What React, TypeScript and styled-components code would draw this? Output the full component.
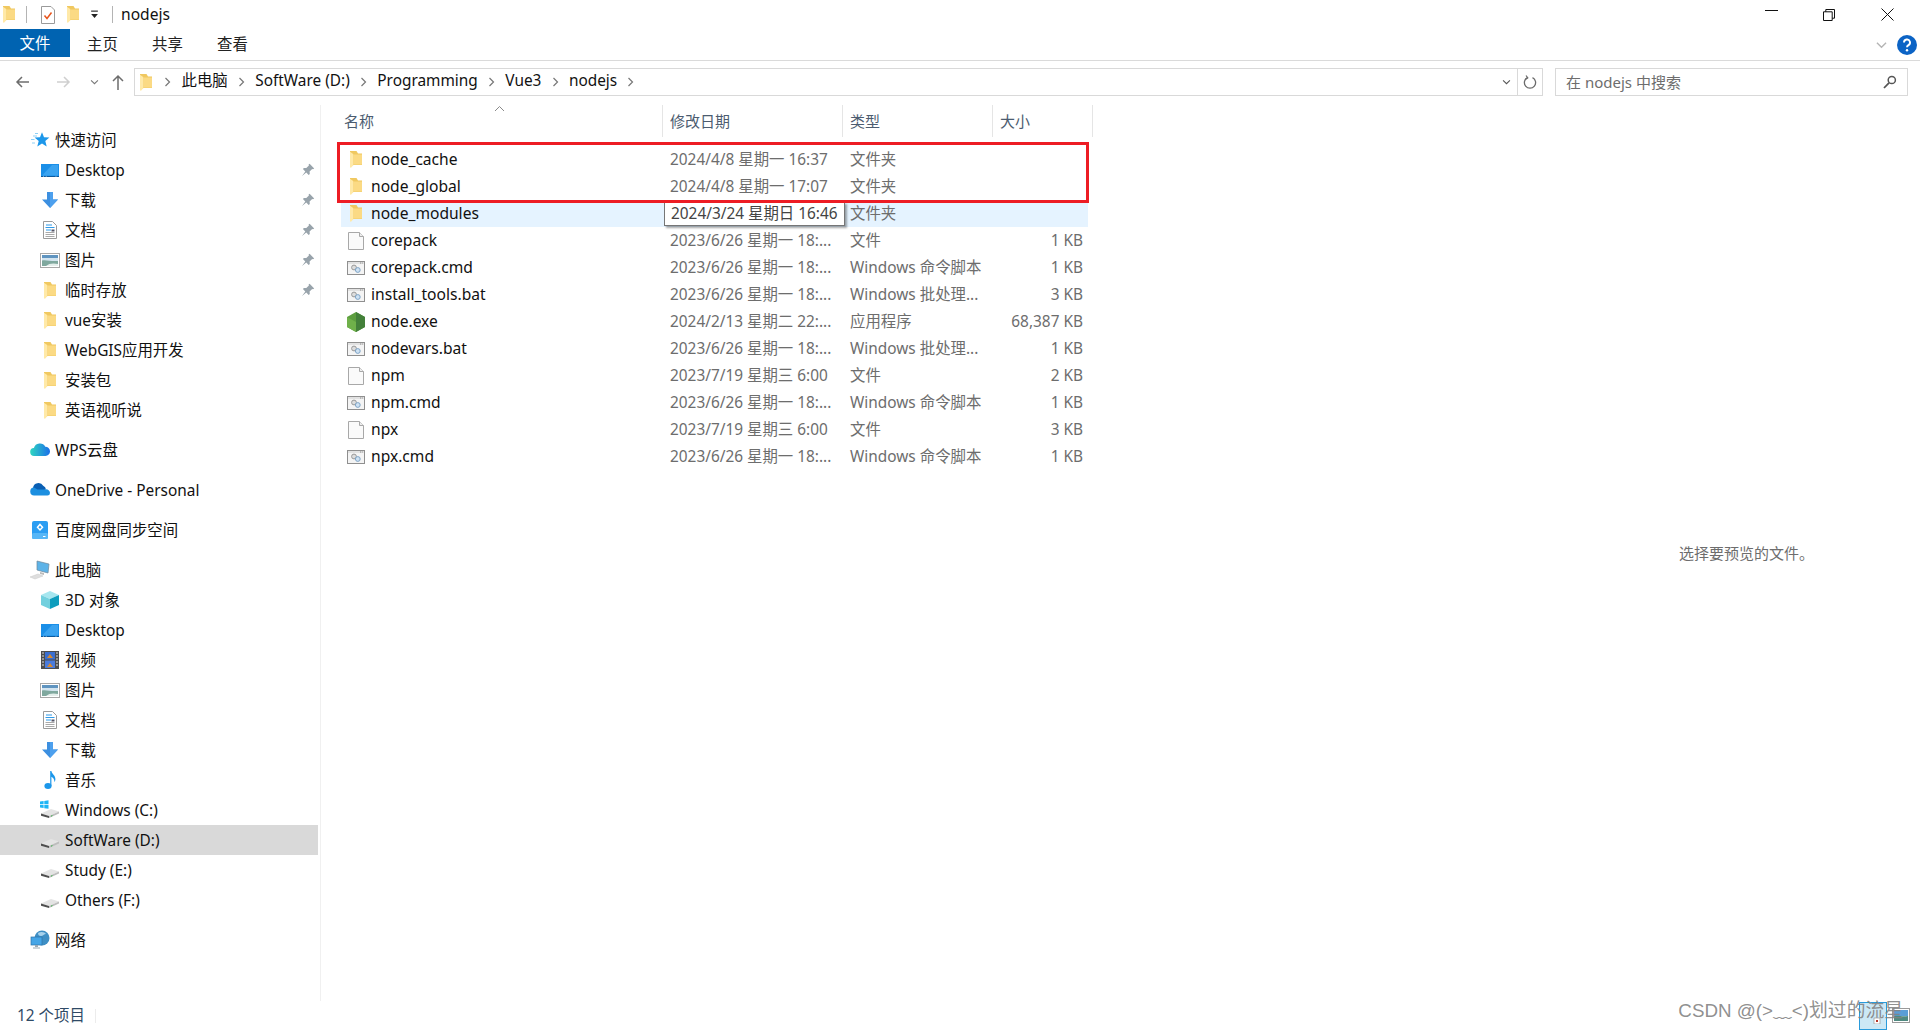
import React from "react";
import styled, { createGlobalStyle } from "styled-components";

const GlobalStyle = createGlobalStyle`
  html, body { margin: 0; padding: 0; background: #fff; }
  body { font-family: "Noto Sans", "Noto Sans CJK SC", sans-serif; line-height: 20px; }
  * { box-sizing: border-box; }
`;

const Window = styled.div`
  position: relative;
  width: 1920px;
  height: 1030px;
  display: flex;
  flex-direction: column;
  overflow: hidden;
  background: #fff;
  color: #000;
`;

/* ---------- title bar ---------- */
const TitleBar = styled.div`
  height: 29px;
  display: flex;
  align-items: center;
  padding-left: 3px;
  flex: none;
`;
const QuickSlot = styled.span<{ $ml: number; $w: number }>`
  margin-left: ${(p) => p.$ml}px;
  width: ${(p) => p.$w}px;
  display: flex;
  justify-content: center;
  align-items: center;
  flex: none;
`;
const TitleSep = styled.span<{ $ml: number }>`
  margin-left: ${(p) => p.$ml}px;
  width: 1px;
  height: 17px;
  background: #b4b4b4;
  flex: none;
`;
const TitleText = styled.span`
  margin-left: 8px;
  padding-bottom: 2px;
  font-size: 15.6px;
  color: #111;
`;
const WindowControls = styled.div`
  margin-left: auto;
  display: flex;
  padding-right: 4px;
  height: 29px;
`;
const WindowButton = styled.span`
  width: 58px;
  display: flex;
  align-items: center;
  justify-content: center;
`;

/* ---------- ribbon ---------- */
const Ribbon = styled.div`
  height: 32px;
  display: flex;
  align-items: flex-start;
  border-bottom: 1px solid #dadada;
  flex: none;
`;
const RibbonTab = styled.div<{ $file?: boolean }>`
  width: ${(p) => (p.$file ? 70 : 65)}px;
  height: 28px;
  padding-top: ${(p) => (p.$file ? 1 : 3)}px;
  display: flex;
  align-items: center;
  justify-content: center;
  font-size: 15.4px;
  background: ${(p) => (p.$file ? "#0063b1" : "transparent")};
  color: ${(p) => (p.$file ? "#fff" : "#222")};
`;
const RibbonRight = styled.div`
  margin-left: auto;
  display: flex;
  align-items: center;
  gap: 9px;
  height: 32px;
  padding: 0 3px 0 0;
`;

/* ---------- nav row ---------- */
const NavRow = styled.div`
  height: 44px;
  display: flex;
  align-items: flex-start;
  padding: 7px 0 0 8px;
  flex: none;
`;
const NavButton = styled.span<{ $w: number }>`
  width: ${(p) => p.$w}px;
  height: 28px;
  display: flex;
  align-items: center;
  justify-content: center;
  flex: none;
`;
const AddressBox = styled.div`
  width: 1409px;
  height: 28px;
  border: 1px solid #d9d9d9;
  display: flex;
  align-items: center;
  padding-left: 5px;
  font-size: 15.4px;
  color: #111;
  flex: none;
`;
const AddressFolder = styled.span`
  display: flex;
  margin-right: 2px;
`;
const CrumbChevron = styled.span`
  width: 27.5px;
  display: flex;
  justify-content: center;
  flex: none;
`;
const Crumb = styled.span`
  padding-bottom: 2px;
  white-space: nowrap;
`;
const AddressEnd = styled.div`
  margin-left: auto;
  display: flex;
  height: 26px;
  align-items: center;
`;
const AddressDrop = styled.span`
  width: 22px;
  display: flex;
  justify-content: center;
`;
const AddressRefresh = styled.span`
  width: 25px;
  height: 26px;
  border-left: 1px solid #d9d9d9;
  display: flex;
  align-items: center;
  justify-content: center;
`;
const SearchBox = styled.div`
  margin-left: 12px;
  width: 353px;
  height: 28px;
  border: 1px solid #d9d9d9;
  display: flex;
  align-items: center;
  justify-content: space-between;
  padding: 0 10px;
  font-size: 15px;
  color: #6d6d6d;
  flex: none;
`;

/* ---------- body ---------- */
const Body = styled.div`
  flex: 1;
  min-height: 0;
  display: flex;
`;
const Sidebar = styled.nav`
  width: 321px;
  flex: none;
  border-right: 1px solid #f0f0f0;
  padding: 20px 2px 0 0;
  font-size: 15.4px;
`;
const NavGroup = styled.div`
  margin-bottom: 10px;
`;
const NavItem = styled.div<{ $child?: boolean; $selected?: boolean }>`
  height: 30px;
  display: flex;
  align-items: center;
  gap: 5px;
  padding-left: ${(p) => (p.$child ? 40 : 30)}px;
  padding-right: 3px;
  background: ${(p) => (p.$selected ? "#d9d9d9" : "transparent")};
  color: #111;
  white-space: nowrap;
`;
const NavLabel = styled.span`
  padding-top: 2px;
`;
const NavPin = styled.span`
  margin-left: auto;
  width: 14px;
  height: 14px;
  display: flex;
`;
const IconSlot = styled.span`
  width: 20px;
  height: 20px;
  display: flex;
  align-items: center;
  justify-content: center;
  flex: none;
`;

const Main = styled.main`
  position: relative;
  flex: 1;
  min-width: 0;
  display: flex;
`;
const ListPane = styled.div`
  flex: 1;
  padding-left: 20px;
  font-size: 15.4px;
`;
const ColumnHeader = styled.div`
  position: relative;
  display: grid;
  grid-template-columns: 322px 180px 150px 100px;
  width: 752px;
  height: 32px;
  color: #4c5c70;
`;
const HeaderCell = styled.div<{ $first?: boolean }>`
  display: flex;
  align-items: center;
  padding-left: ${(p) => (p.$first ? 3 : 7)}px;
  border-right: 1px solid #e5e5e5;
  font-size: 15px;
`;
const SortCaret = styled.span`
  position: absolute;
  left: 153px;
  top: 0;
  display: flex;
`;
const Rows = styled.div`
  padding-top: 9px;
`;
const Row = styled.div<{ $hot?: boolean }>`
  display: grid;
  grid-template-columns: 321px 180px 150px 96px;
  width: 747px;
  height: 27px;
  align-items: center;
  background: ${(p) => (p.$hot ? "#e5f3ff" : "transparent")};
`;
const NameCell = styled.div`
  display: flex;
  align-items: center;
  color: #111;
  font-size: 15.6px;
  white-space: nowrap;
`;
const NameText = styled.span`
  padding-bottom: 2px;
`;
const NameIcon = styled.span`
  width: 30px;
  padding: 0 6px;
  height: 22px;
  display: flex;
  align-items: center;
  justify-content: center;
  flex: none;
`;
const MetaCell = styled.div<{ $right?: boolean }>`
  padding: ${(p) => (p.$right ? "0 5px 0 0" : "0 0 0 8px")};
  text-align: ${(p) => (p.$right ? "right" : "left")};
  color: #6d6d6d;
  white-space: nowrap;
  overflow: hidden;
`;
const RedBox = styled.div`
  position: absolute;
  left: 16px;
  top: 37px;
  width: 752px;
  height: 61px;
  border: 3px solid #ed1c24;
  pointer-events: none;
`;
const Tooltip = styled.div`
  position: absolute;
  left: 343px;
  top: 97px;
  width: 181px;
  height: 24px;
  padding-left: 6px;
  display: flex;
  align-items: center;
  background: #fff;
  border: 1px solid #767676;
  box-shadow: 2px 2px 2px rgba(0, 0, 0, 0.35);
  color: #444;
  font-size: 15.4px;
  white-space: nowrap;
`;
const PreviewPane = styled.div`
  width: 350px;
  flex: none;
  display: flex;
  align-items: center;
  justify-content: center;
  padding-left: 3px;
  font-size: 15px;
  color: #6d6d6d;
`;

/* ---------- status ---------- */
const StatusBar = styled.div`
  height: 29px;
  flex: none;
  display: flex;
  align-items: center;
  padding: 0 10px 0 17px;
  font-size: 15.4px;
  color: #2f4a66;
`;
const StatusCount = styled.span`
  width: 79px;
  height: 14px;
  display: flex;
  align-items: center;
  border-right: 1px solid #ececec;
  white-space: nowrap;
`;
const ViewButtons = styled.div`
  margin-left: auto;
  display: flex;
  align-items: center;
  gap: 5px;
`;
const ViewButton = styled.span<{ $active?: boolean }>`
  width: ${(p) => (p.$active ? 28 : 18)}px;
  height: 28px;
  display: flex;
  align-items: center;
  justify-content: center;
  border: ${(p) => (p.$active ? "1px solid #2a9bdb" : "none")};
  background: ${(p) => (p.$active ? "#cce8f5" : "transparent")};
`;
const Watermark = styled.div`
  position: absolute;
  right: 17px;
  bottom: 6px;
  font-family: "Liberation Sans", "Noto Sans CJK SC", sans-serif;
  font-size: 18.8px;
  line-height: 26px;
  color: rgba(130, 130, 130, 0.9);
  white-space: nowrap;
`;

/* ---------- drawings ---------- */
const Folder = ({ w = 12, h = 17 }: { w?: number; h?: number }) => (
  <svg width={w} height={h} viewBox="0 0 12 17">
    <path d="M0 0h6.5L8 2.5h4V14H0z" fill="#f0c860" />
    <path d="M3.2 3.5H12V13.6H3.2z" fill="#fbda84" />
    <path d="M0 .8 3.2 3v11.2L.8 17 0 16z" fill="#ffe9a8" />
  </svg>
);
const Blank = () => (
  <svg width="18" height="20" viewBox="0 0 18 20">
    <path d="M1.5 1.5h11l4 4v13h-15z" fill="#fafafa" stroke="#a8a8a8" />
    <path d="M12.5 1.5v4h4" fill="#eee" stroke="#a8a8a8" />
  </svg>
);
const Script = () => (
  <svg width="18" height="14" viewBox="0 0 18 14">
    <rect x=".5" y=".5" width="17" height="13" fill="#f4f4f4" stroke="#8f8f8f" />
    <path d="M1 1h16v2H1z" fill="#e2e2e2" />
    <path d="M13 2h.8m1 0h.8" stroke="#777" />
    <circle cx="7" cy="6.5" r="2.4" fill="#ddd" stroke="#999" />
    <circle cx="10.8" cy="9" r="2.4" fill="#cfe2f3" stroke="#7fa4c6" />
  </svg>
);
const NodeHex = () => (
  <svg width="18" height="20" viewBox="0 0 18 20">
    <path d="M9 0l9 5v10l-9 5-9-5V5z" fill="#5c9e3f" />
    <path d="M9 0l9 5v10l-9 5z" fill="#43803a" />
    <path d="M0 5l9 5v10l-9-5z" fill="#6fb04a" />
  </svg>
);
const PinIcon = () => (
  <svg width="14" height="14" viewBox="0 0 14 14">
    <path d="M8.6.8l4.6 4.6-1.2.9-.8-.3-2.6 2.6.2 2.3-1.1 1.1-2.4-2.6L1 13l3.3-4.6-2.4-2.5 1-1 2.4.2 2.6-2.6-.3-.9z" fill="#98a3ab" />
  </svg>
);
const Star = () => (
  <svg width="20" height="20" viewBox="0 0 20 20">
    <path d="M3 6h4M1 9.5h3.5M2 13h3M5 3.5h3" stroke="#8fd0f5" strokeWidth="1" />
    <path d="M12 2.2l2 5 5.4.4-4.1 3.5 1.4 5.4-4.7-3-4.7 3 1.4-5.4L4.6 7.6 10 7.2z" fill="#1c97ea" />
  </svg>
);
const DesktopIcon = () => (
  <svg width="20" height="20" viewBox="0 0 20 20">
    <rect x="1" y="4" width="18" height="13" fill="#1a8fe8" />
    <path d="M2 15.5 12 5h6v10.5z" fill="#3aa3f0" />
    <path d="M1 16h18v1H1z" fill="#0c5a9e" />
    <path d="M3 16.4h.8m2 0h.8m9 0h.8" stroke="#fff" strokeWidth=".6" />
  </svg>
);
const DownloadIcon = () => (
  <svg width="20" height="20" viewBox="0 0 20 20">
    <path d="M7 2h6v7.5h5L10 18 2 9.5h5z" fill="#3c8fe0" />
    <path d="M10 2h3v7.5h5L10 18z" fill="#4da0ee" />
  </svg>
);
const DocsIcon = () => (
  <svg width="20" height="20" viewBox="0 0 20 20">
    <path d="M3.5 1.5h9l4 4v13h-13z" fill="#fff" stroke="#9a9a9a" />
    <path d="M6 5h6M5.5 7.5h9M6 10h5" stroke="#2f9ae8" strokeWidth="1.1" />
    <path d="M5.5 12.5h9M5.5 14.5h9M5.5 16.5h9" stroke="#a9a9a9" />
    <path d="M11.5 9.5h3v2h-3z" fill="#556" />
  </svg>
);
const PicturesIcon = () => (
  <svg width="20" height="20" viewBox="0 0 20 20">
    <rect x=".5" y="3.5" width="19" height="14" fill="#fff" stroke="#a8a8a8" />
    <rect x="2" y="5" width="16" height="3" fill="#5f94c0" />
    <rect x="2" y="8" width="16" height="3" fill="#d3e4ef" />
    <path d="M2 10.5c4-1 8 1 16 .5v5H2z" fill="#7fa89e" />
    <path d="M6 16c3-3 8-3 12-2v2z" fill="#e4eeeb" />
  </svg>
);
const WpsCloud = () => (
  <svg width="20" height="20" viewBox="0 0 20 20">
    <defs>
      <linearGradient id="wpsCloud" x1="0" y1="0" x2="1" y2="0">
        <stop offset="0" stopColor="#2fd6c0" />
        <stop offset="1" stopColor="#1a6fe8" />
      </linearGradient>
    </defs>
    <path d="M4.5 16a4 4 0 0 1-.6-8 6.2 6.2 0 0 1 11.4-1.2A4.6 4.6 0 0 1 15.5 16z" fill="url(#wpsCloud)" />
  </svg>
);
const OneDriveCloud = () => (
  <svg width="20" height="20" viewBox="0 0 20 20">
    <path d="M3 8a5.5 5.5 0 0 1 10.2-2.2A4.5 4.5 0 0 1 16 9.5L7 12z" fill="#0a5fb4" />
    <path d="M4.5 15.5a4 4 0 0 1-.5-8l3.5 2 8 0a3.6 3.6 0 0 1 4.5 3.5 2.6 2.6 0 0 1-2.6 2.5z" fill="#1c8fe0" />
  </svg>
);
const BaiduIcon = () => (
  <svg width="20" height="20" viewBox="0 0 20 20">
    <rect x="2" y="1" width="16" height="18" rx="2" fill="#2b9df2" />
    <rect x="2" y="13" width="16" height="6" rx="1.5" fill="#56b6f7" />
    <path d="M10 4.5l2.5 2.8L10 10 7.5 7.3z" fill="none" stroke="#fff" strokeWidth="1.5" />
    <path d="M13 16.5h2.5" stroke="#fff" />
  </svg>
);
const PcIcon = () => (
  <svg width="20" height="20" viewBox="0 0 20 20">
    <path d="M7 1l12 3-1 9-11-3z" fill="#5db3e8" stroke="#6f8799" strokeWidth=".7" />
    <path d="M10 12l4 1v2l-4-1z" fill="#bbb" />
    <path d="M0 17l8-3 5 2-8 3z" fill="#dedede" stroke="#c8c8c8" strokeWidth=".5" />
  </svg>
);
const CubeIcon = () => (
  <svg width="20" height="20" viewBox="0 0 20 20">
    <path d="M10 1l9 4-9 4-9-4z" fill="#a6e6ef" />
    <path d="M1 5l9 4v10l-9-4z" fill="#72d0de" />
    <path d="M19 5l-9 4v10l9-4z" fill="#0d9dbd" />
  </svg>
);
const FilmIcon = () => (
  <svg width="20" height="20" viewBox="0 0 20 20">
    <rect x="1" y="1" width="18" height="18" fill="#4d4d4d" />
    <rect x="5" y="2" width="10" height="7.5" fill="#3b6fd0" />
    <rect x="5" y="10.5" width="10" height="7.5" fill="#4a7bdc" />
    <path d="M7 8l3-4 3 4z" fill="#d88a2e" />
    <path d="M7 17l3-4 3 4z" fill="#d88a2e" />
    <path d="M2 3h2M2 6h2M2 9h2M2 12h2M2 15h2M16 3h2M16 6h2M16 9h2M16 12h2M16 15h2" stroke="#ddd" />
  </svg>
);
const MusicIcon = () => (
  <svg width="20" height="20" viewBox="0 0 20 20">
    <ellipse cx="8" cy="16" rx="3.6" ry="3" fill="#1c97ea" />
    <path d="M10.2 1h1.2c.3 3 4 4 4 8 0 1.2-.4 2.3-1 3 .2-3-1.6-4.6-3-5.2V16h-1.2z" fill="#1c97ea" />
  </svg>
);
const DriveIcon = ({ win }: { win?: boolean }) => (
  <svg width="20" height="20" viewBox="0 0 20 20">
    <path d="M1 13.5 11 9l8 2.5-10 4.4z" fill="#e4e4e4" />
    <path d="M1 13.5l8 2.4V18l-8-2.2z" fill="#4f4f4f" />
    <path d="M9 15.9l10-4.4v2L9 18z" fill="#bdbdbd" />
    <path d="M11 16.2l1.4-.6" stroke="#39b54a" />
    {win && <path d="M0 1.5l3.6-.5v3.2H0zM4.3 .9 8.5 .3v3.9H4.3zM0 4.9h3.6v3.2L0 7.6zM4.3 4.9h4.2v3.9l-4.2-.6z" fill="#1db5f5" />}
  </svg>
);
const NetworkIcon = () => (
  <svg width="20" height="20" viewBox="0 0 20 20">
    <circle cx="12" cy="8" r="7.5" fill="#3f8fc4" />
    <path d="M8 3c3-2 7-1 8 1-2 0-3 2-5 2S8 5 8 3z" fill="#a8d2ec" />
    <rect x="1" y="7" width="11" height="8" fill="#45a5e6" stroke="#2c74aa" strokeWidth=".7" />
    <path d="M5 15h3v2H5zM3 17.5h7v1H3z" fill="#9aa9b4" />
  </svg>
);
const CheckDoc = () => (
  <svg width="14" height="18" viewBox="0 0 14 18">
    <path d="M.5.5h9.5l3.5 3.5v13.5H.5z" fill="#fff" stroke="#9a9a9a" />
    <path d="M3.5 9.5 6 12.5l4.5-6" fill="none" stroke="#e8561e" strokeWidth="1.5" />
  </svg>
);
const QuickDrop = () => (
  <svg width="9" height="9" viewBox="0 0 8 8">
    <path d="M1 1h6" stroke="#222" />
    <path d="M1 3.5h6L4 7z" fill="#222" />
  </svg>
);
const Minimize = () => (
  <svg width="13" height="12" viewBox="0 0 13 12">
    <path d="M0 1.5h13" stroke="#111" />
  </svg>
);
const Restore = () => (
  <svg width="12" height="12" viewBox="0 0 12 12">
    <path d="M.5 2.8h8.7v8.7H.5zM2.8 2.8V.5h8.7v8.7H9.2" fill="none" stroke="#111" />
  </svg>
);
const Close = () => (
  <svg width="13" height="13" viewBox="0 0 13 13">
    <path d="M.5.5l12 12m0-12-12 12" stroke="#111" />
  </svg>
);
const Chev = ({ color = "#777", w = 7, h = 10, d = "right" }: { color?: string; w?: number; h?: number; d?: string }) =>
  d === "right" ? (
    <svg width={w} height={h} viewBox="0 0 7 10">
      <path d="M1.5 1l4 4-4 4" fill="none" stroke={color} strokeWidth="1.2" />
    </svg>
  ) : (
    <svg width={h} height={w} viewBox="0 0 10 7">
      <path d="M1 1.5l4 4 4-4" fill="none" stroke={color} strokeWidth="1.2" />
    </svg>
  );
const Arrow = ({ color, dir }: { color: string; dir: "left" | "right" | "up" }) => (
  <svg width="16" height="16" viewBox="0 0 16 16">
    {dir === "left" && <path d="M14 8H2M7 3 2 8l5 5" fill="none" stroke={color} strokeWidth="1.5" />}
    {dir === "right" && <path d="M2 8h12M9 3l5 5-5 5" fill="none" stroke={color} strokeWidth="1.5" />}
    {dir === "up" && <path d="M8 16V2M3 7l5-5 5 5" fill="none" stroke={color} strokeWidth="1.5" />}
  </svg>
);
const Refresh = () => (
  <svg width="14" height="15" viewBox="0 0 14 15">
    <path d="M9.5 2.6a5.6 5.6 0 1 1-5 0" fill="none" stroke="#6a6a6a" strokeWidth="1.3" />
    <path d="M3 .5l1.8 2.3L2.3 4.5" fill="none" stroke="#6a6a6a" strokeWidth="1.2" />
  </svg>
);
const SearchGlass = () => (
  <svg width="14" height="14" viewBox="0 0 14 14">
    <circle cx="8.8" cy="5" r="3.6" fill="none" stroke="#555" strokeWidth="1.5" />
    <path d="M6 7.8 1 13" stroke="#555" strokeWidth="1.8" />
  </svg>
);
const HelpCircle = () => (
  <svg width="20" height="20" viewBox="0 0 20 20">
    <circle cx="10" cy="10" r="10" fill="#0b63c5" />
    <path d="M7 7.5a3 3 0 1 1 4.4 2.6c-1 .6-1.4 1-1.4 2.2" fill="none" stroke="#fff" strokeWidth="1.9" />
    <circle cx="10" cy="15.2" r="1.2" fill="#fff" />
  </svg>
);
const Caret = () => (
  <svg width="11" height="7" viewBox="0 0 11 7">
    <path d="M1 6l4.5-4.5L10 6" fill="none" stroke="#8a8a8a" />
  </svg>
);
const ThumbSmall = () => (
  <svg width="18" height="16" viewBox="0 0 18 16">
    <rect x="10" y="10" width="6" height="6" fill="#fff" stroke="#888" strokeWidth=".6" />
    <rect x="12" y="12" width="2" height="2" fill="#b5352a" />
  </svg>
);
const ThumbPicture = () => (
  <svg width="18" height="15" viewBox="0 0 18 15">
    <rect x=".5" y=".5" width="17" height="14" fill="#fff" stroke="#9a9a9a" />
    <rect x="2" y="2" width="14" height="6" fill="#5a9ed6" />
    <path d="M2 8c4-1 8 1 14 0v5H2z" fill="#4f8a80" />
  </svg>
);

/* ---------- data ---------- */
type NavEntry = { label: string; icon: React.ReactNode; child?: boolean; pin?: boolean; selected?: boolean };

const navGroups: NavEntry[][] = [
  [
    { label: "快速访问", icon: <Star /> },
    { label: "Desktop", icon: <DesktopIcon />, child: true, pin: true },
    { label: "下载", icon: <DownloadIcon />, child: true, pin: true },
    { label: "文档", icon: <DocsIcon />, child: true, pin: true },
    { label: "图片", icon: <PicturesIcon />, child: true, pin: true },
    { label: "临时存放", icon: <Folder />, child: true, pin: true },
    { label: "vue安装", icon: <Folder />, child: true },
    { label: "WebGIS应用开发", icon: <Folder />, child: true },
    { label: "安装包", icon: <Folder />, child: true },
    { label: "英语视听说", icon: <Folder />, child: true },
  ],
  [{ label: "WPS云盘", icon: <WpsCloud /> }],
  [{ label: "OneDrive - Personal", icon: <OneDriveCloud /> }],
  [{ label: "百度网盘同步空间", icon: <BaiduIcon /> }],
  [
    { label: "此电脑", icon: <PcIcon /> },
    { label: "3D 对象", icon: <CubeIcon />, child: true },
    { label: "Desktop", icon: <DesktopIcon />, child: true },
    { label: "视频", icon: <FilmIcon />, child: true },
    { label: "图片", icon: <PicturesIcon />, child: true },
    { label: "文档", icon: <DocsIcon />, child: true },
    { label: "下载", icon: <DownloadIcon />, child: true },
    { label: "音乐", icon: <MusicIcon />, child: true },
    { label: "Windows (C:)", icon: <DriveIcon win />, child: true },
    { label: "SoftWare (D:)", icon: <DriveIcon />, child: true, selected: true },
    { label: "Study (E:)", icon: <DriveIcon />, child: true },
    { label: "Others (F:)", icon: <DriveIcon />, child: true },
  ],
  [{ label: "网络", icon: <NetworkIcon /> }],
];

const files: { name: string; date: string; type: string; size: string; icon: React.ReactNode; hot?: boolean }[] = [
  { name: "node_cache", date: "2024/4/8 星期一 16:37", type: "文件夹", size: "", icon: <Folder /> },
  { name: "node_global", date: "2024/4/8 星期一 17:07", type: "文件夹", size: "", icon: <Folder /> },
  { name: "node_modules", date: "2024/3/24 星期日 16:46", type: "文件夹", size: "", icon: <Folder />, hot: true },
  { name: "corepack", date: "2023/6/26 星期一 18:...", type: "文件", size: "1 KB", icon: <Blank /> },
  { name: "corepack.cmd", date: "2023/6/26 星期一 18:...", type: "Windows 命令脚本", size: "1 KB", icon: <Script /> },
  { name: "install_tools.bat", date: "2023/6/26 星期一 18:...", type: "Windows 批处理...", size: "3 KB", icon: <Script /> },
  { name: "node.exe", date: "2024/2/13 星期二 22:...", type: "应用程序", size: "68,387 KB", icon: <NodeHex /> },
  { name: "nodevars.bat", date: "2023/6/26 星期一 18:...", type: "Windows 批处理...", size: "1 KB", icon: <Script /> },
  { name: "npm", date: "2023/7/19 星期三 6:00", type: "文件", size: "2 KB", icon: <Blank /> },
  { name: "npm.cmd", date: "2023/6/26 星期一 18:...", type: "Windows 命令脚本", size: "1 KB", icon: <Script /> },
  { name: "npx", date: "2023/7/19 星期三 6:00", type: "文件", size: "3 KB", icon: <Blank /> },
  { name: "npx.cmd", date: "2023/6/26 星期一 18:...", type: "Windows 命令脚本", size: "1 KB", icon: <Script /> },
];

const crumbs = ["此电脑", "SoftWare (D:)", "Programming", "Vue3", "nodejs"];

export default function App() {
  return (
    <Window>
      <GlobalStyle />
      <TitleBar>
        <QuickSlot $ml={0} $w={12}><Folder /></QuickSlot>
        <TitleSep $ml={11} />
        <QuickSlot $ml={14} $w={14}><CheckDoc /></QuickSlot>
        <QuickSlot $ml={12} $w={12}><Folder /></QuickSlot>
        <QuickSlot $ml={11} $w={9}><QuickDrop /></QuickSlot>
        <TitleSep $ml={13} />
        <TitleText>nodejs</TitleText>
        <WindowControls>
          <WindowButton><Minimize /></WindowButton>
          <WindowButton><Restore /></WindowButton>
          <WindowButton><Close /></WindowButton>
        </WindowControls>
      </TitleBar>

      <Ribbon>
        <RibbonTab $file>文件</RibbonTab>
        <RibbonTab>主页</RibbonTab>
        <RibbonTab>共享</RibbonTab>
        <RibbonTab>查看</RibbonTab>
        <RibbonRight>
          <Chev d="down" color="#b5b5b5" w={8} h={13} />
          <HelpCircle />
        </RibbonRight>
      </Ribbon>

      <NavRow>
        <NavButton $w={30}><Arrow color="#6d6d6d" dir="left" /></NavButton>
        <NavButton $w={49}><Arrow color="#cfcfcf" dir="right" /></NavButton>
        <NavButton $w={14}><Chev d="down" color="#777" w={6} h={9} /></NavButton>
        <NavButton $w={33}><Arrow color="#6d6d6d" dir="up" /></NavButton>
        <AddressBox>
          <AddressFolder><Folder /></AddressFolder>
          <CrumbChevron><Chev /></CrumbChevron>
          {crumbs.map((c) => (
            <React.Fragment key={c}>
              <Crumb>{c}</Crumb>
              <CrumbChevron><Chev /></CrumbChevron>
            </React.Fragment>
          ))}
          <AddressEnd>
            <AddressDrop><Chev d="down" color="#555" w={6} h={9} /></AddressDrop>
            <AddressRefresh><Refresh /></AddressRefresh>
          </AddressEnd>
        </AddressBox>
        <SearchBox>
          <span>在 nodejs 中搜索</span>
          <SearchGlass />
        </SearchBox>
      </NavRow>

      <Body>
        <Sidebar>
          {navGroups.map((group, i) => (
            <NavGroup key={i}>
              {group.map((item) => (
                <NavItem key={item.label} $child={item.child} $selected={item.selected}>
                  <IconSlot>{item.icon}</IconSlot>
                  <NavLabel>{item.label}</NavLabel>
                  {item.pin && <NavPin><PinIcon /></NavPin>}
                </NavItem>
              ))}
            </NavGroup>
          ))}
        </Sidebar>

        <Main>
          <ListPane>
            <ColumnHeader>
              <HeaderCell $first>名称</HeaderCell>
              <HeaderCell>修改日期</HeaderCell>
              <HeaderCell>类型</HeaderCell>
              <HeaderCell>大小</HeaderCell>
              <SortCaret><Caret /></SortCaret>
            </ColumnHeader>
            <Rows>
              {files.map((f) => (
                <Row key={f.name} $hot={f.hot}>
                  <NameCell>
                    <NameIcon>{f.icon}</NameIcon>
                    <NameText>{f.name}</NameText>
                  </NameCell>
                  <MetaCell>{f.date}</MetaCell>
                  <MetaCell>{f.type}</MetaCell>
                  <MetaCell $right>{f.size}</MetaCell>
                </Row>
              ))}
            </Rows>
          </ListPane>
          <PreviewPane>选择要预览的文件。</PreviewPane>
          <Tooltip>2024/3/24 星期日 16:46</Tooltip>
          <RedBox />
        </Main>
      </Body>

      <StatusBar>
        <StatusCount>12 个项目</StatusCount>
        <ViewButtons>
          <ViewButton $active><ThumbSmall /></ViewButton>
          <ViewButton><ThumbPicture /></ViewButton>
        </ViewButtons>
      </StatusBar>
      <Watermark>CSDN @(&gt;﹏&lt;)划过的流星</Watermark>
    </Window>
  );
}
